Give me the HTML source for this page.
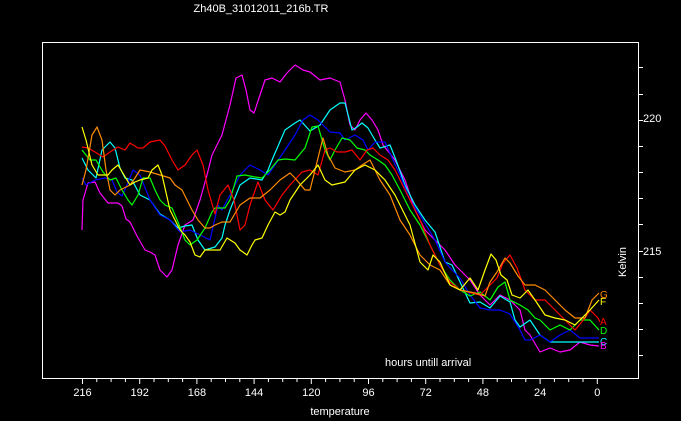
<!DOCTYPE html>
<html><head><meta charset="utf-8"><style>
html,body{margin:0;padding:0;background:#000;width:681px;height:421px;overflow:hidden}
svg{display:block}
text{font-family:"Liberation Sans",sans-serif;fill:#fff}
</style></head><body>
<svg width="681" height="421" viewBox="0 0 681 421">
<rect width="681" height="421" fill="#000"/>
<text x="261" y="12" font-size="11" text-anchor="middle">Zh40B_31012011_216b.TR</text>
<rect x="42.5" y="42.5" width="596" height="336" fill="none" stroke="#fff" stroke-width="1"/>
<g stroke="#fff" stroke-width="1" fill="none">
<path d="M638 67.5h5M638 94.5h5M638 120.5h5M638 146.5h5M638 172.5h5M638 198.5h5M638 224.5h5M638 251.5h5M638 277.5h5M638 303.5h5M638 329.5h5M638 355.5h5"/>
<path d="M82.5 378v6M96.8 378v4M111.1 378v4M125.4 378v4M139.7 378v6M154 378v4M168.3 378v4M182.6 378v4M196.9 378v6M211.2 378v4M225.5 378v4M239.8 378v4M254.1 378v6M268.4 378v4M282.7 378v4M297 378v4M311.3 378v6M325.6 378v4M339.9 378v4M354.2 378v4M368.5 378v6M382.8 378v4M397.1 378v4M411.4 378v4M425.7 378v6M440 378v4M454.3 378v4M468.6 378v4M482.9 378v6M497.2 378v4M511.5 378v4M525.8 378v4M540.1 378v6M554.4 378v4M568.7 378v4M583 378v4M597.3 378v6"/>
</g>
<text x="643" y="122" font-size="11">220</text>
<text x="643" y="255" font-size="11">215</text>
<g font-size="11" text-anchor="middle">
<text x="82.5" y="396">216</text><text x="139.7" y="396">192</text><text x="196.9" y="396">168</text><text x="254.1" y="396">144</text><text x="311.3" y="396">120</text><text x="368.5" y="396">96</text><text x="425.7" y="396">72</text><text x="482.9" y="396">48</text><text x="540.1" y="396">24</text><text x="597.3" y="396">0</text>
</g>
<text x="340" y="415" font-size="11" text-anchor="middle">temperature</text>
<text x="385" y="366" font-size="11">hours untill arrival</text>
<text x="626" y="262" font-size="11" text-anchor="middle" transform="rotate(-90 626 262)">Kelvin</text>
<g fill="none" stroke-width="1.2" stroke-linejoin="round">
<polyline stroke="#ff00ff" points="82,230 83,200 88,183 95,182 100,193 108,203 118,203 122,206 126,219 130,222 137,236 145,250 150,252 155,255 160,270 167,277 172,270 178,245 185,225 193,220 200,200 207,175 212,155 222,135 230,105 236,78 242,75 246,90 250,110 254,113 260,95 265,80 272,78 280,82 287,73 295,65 303,70 310,72 320,80 330,78 340,82 345,100 350,125 355,130 360,120 366,113 372,120 378,130 383,145 395,160 405,180 415,210 425,230 435,240 445,250 455,265 470,280 480,295 490,305 495,300 500,295 510,300 520,310 525,330 530,335 540,352 550,348 560,352 570,350 580,342 590,345 599,346"/>
<polyline stroke="#00ffff" points="82,158 88,170 96,178 102,150 110,142 115,148 120,168 125,178 132,180 140,195 150,200 160,214 170,220 178,228 185,226 192,225 198,240 205,250 215,247 222,238 225,225 230,210 240,185 250,178 262,180 268,170 272,160 285,130 295,123 300,120 310,131 320,125 330,110 340,103 345,103 352,130 357,127 362,123 368,128 375,140 380,148 390,145 396,160 405,185 415,205 425,220 435,232 445,262 452,265 460,282 470,303 480,302 490,308 500,296 510,302 515,320 520,327 530,320 540,335 550,342 570,342 590,342 599,342"/>
<polyline stroke="#0000ff" points="82,178 86,185 95,180 105,178 112,180 117,192 122,196 127,185 133,170 140,175 150,200 160,215 170,220 180,232 190,230 200,235 210,240 218,205 222,210 230,195 240,175 250,165 260,170 268,175 275,165 285,150 295,135 303,120 310,115 318,120 330,132 340,133 345,140 355,135 363,140 368,150 375,142 385,142 393,160 400,175 410,200 420,215 435,240 445,262 452,270 460,278 470,295 480,308 490,310 500,310 510,314 520,330 525,340 530,340 540,335 550,342 560,335 570,330 580,338 590,338 599,338"/>
<polyline stroke="#00ff00" points="82,150 90,160 96,160 103,172 110,180 116,178 122,190 128,200 132,205 138,195 143,178 150,178 155,190 160,200 165,205 172,208 178,222 185,240 190,245 197,240 205,228 212,212 215,208 225,208 230,200 237,176 245,175 255,177 262,178 270,170 278,160 285,159 295,160 305,148 312,127 318,126 325,150 330,160 335,150 342,138 350,140 357,148 365,150 370,155 378,160 385,165 392,175 400,190 410,210 420,225 430,245 440,265 450,280 460,290 470,296 480,292 490,300 498,287 505,282 510,300 520,305 528,310 535,318 540,320 550,330 560,325 570,330 580,320 590,320 599,330"/>
<polyline stroke="#ff0000" points="82,147 88,148 95,152 103,157 110,152 118,147 125,150 130,143 138,148 143,148 150,142 160,140 165,146 172,160 178,170 185,165 192,155 197,150 203,165 208,190 215,214 220,195 228,185 234,200 240,230 245,225 250,205 258,182 265,200 273,210 282,195 290,185 302,172 310,170 318,175 325,150 330,148 337,152 345,152 352,150 360,160 367,150 373,148 380,155 388,160 395,170 410,200 420,220 430,245 440,265 450,282 460,290 480,295 490,285 497,278 503,263 510,255 517,268 525,290 535,300 545,300 555,310 565,320 575,330 585,318 590,310 598,318 600,322"/>
<polyline stroke="#ff8c00" points="82,185 86,170 92,135 97,127 102,140 106,170 110,190 115,195 120,190 130,185 135,178 140,170 150,172 160,175 170,178 175,185 182,190 187,200 192,210 198,220 205,228 210,228 215,225 222,222 230,222 240,205 250,198 260,198 270,190 280,180 290,173 295,178 305,190 310,190 315,170 323,138 328,155 335,168 345,172 355,170 362,165 370,160 380,180 390,195 400,220 410,235 420,255 430,265 440,270 450,285 460,290 475,293 485,296 490,282 497,272 505,258 510,263 518,276 525,285 535,285 545,290 555,300 565,310 575,318 585,318 592,300 599,293"/>
<polyline stroke="#ffff00" points="82,127 86,140 92,165 98,175 108,175 112,170 118,165 124,175 130,185 135,182 140,180 148,178 152,170 158,165 162,175 170,210 175,220 180,230 185,235 190,242 195,255 200,257 205,250 212,250 220,250 227,238 235,243 240,250 247,255 252,245 255,240 262,238 268,225 275,212 280,215 285,212 290,200 300,185 310,175 318,165 325,180 332,185 345,182 355,170 365,165 375,170 385,180 395,195 410,225 420,262 428,270 433,255 440,262 450,285 460,290 470,278 478,290 485,270 491,254 496,260 501,275 507,280 512,295 520,298 528,290 535,300 545,315 555,318 565,320 575,325 580,320 590,310 599,300"/>
</g>
<g font-size="10">
<text x="600" y="298" style="fill:#ff8c00">G</text>
<text x="600" y="305" style="fill:#ffff00">F</text>
<text x="600" y="325" style="fill:#ff0000">A</text>
<text x="600" y="334" style="fill:#00ff00">D</text>
<text x="600" y="345" style="fill:#00ffff">C</text>
<text x="600" y="349" style="fill:#ff00ff">B</text>
</g>
</svg>
</body></html>
